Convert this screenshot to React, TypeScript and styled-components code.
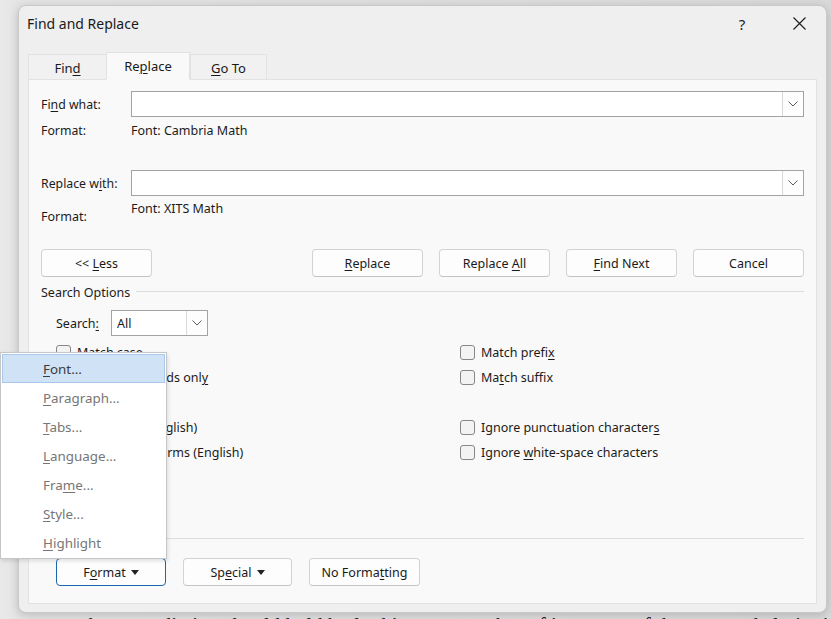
import { FC, ReactNode } from 'react';
import styled, { createGlobalStyle } from 'styled-components';

const GlobalStyle = createGlobalStyle`
  html, body {
    margin: 0;
    padding: 0;
  }
  body {
    font-family: 'Noto Sans', 'Open Sans', sans-serif;
    font-size: 12px;
    color: #1b1b1b;
    background: #dedede;
  }
  * {
    box-sizing: border-box;
  }
`;

const Desktop = styled.div`
  position: relative;
  width: 831px;
  height: 619px;
  overflow: hidden;
  background: #e4e4e4;
`;

const DocPage = styled.div`
  height: 100%;
  display: flex;
  flex-direction: column;
  justify-content: flex-end;
  padding: 0 0 0 40px;
  background: linear-gradient(to right, #e9e9e9 0, #e4e4e4 18px, #d9d9d9 100%);
`;

const DocText = styled.div`
  font-family: 'Liberation Serif', serif;
  font-size: 21px;
  line-height: 1;
  color: #1a1a1a;
  white-space: nowrap;
  margin-bottom: -17px;
`;

const Dialog = styled.div`
  position: absolute;
  left: 18px;
  top: 5px;
  width: 809px;
  height: 608px;
  display: flex;
  flex-direction: column;
  background: #efefef;
  border: 1px solid #c9c9c9;
  border-radius: 8px;
  box-shadow: 0 2px 10px rgba(0, 0, 0, 0.18);
`;

const TitleBar = styled.div`
  height: 35px;
  display: flex;
  align-items: center;
  padding-left: 8px;
`;

const Title = styled.div`
  flex: 1;
  font-size: 14px;
  color: #1a1a1a;
`;

const TitleControls = styled.div`
  display: flex;
  align-items: center;
  gap: 19px;
  margin-right: 4px;
`;

const HelpButton = styled.div`
  width: 30px;
  text-align: center;
  font-size: 15px;
  color: #222;
`;

const CloseButton = styled.div`
  width: 46px;
  height: 30px;
  display: flex;
  align-items: center;
  justify-content: center;
`;

const TabRow = styled.div`
  display: flex;
  align-items: flex-end;
  height: 28px;
  margin-top: 11px;
  padding-left: 9px;
  position: relative;
  z-index: 1;
  margin-bottom: -1px;
`;

const Tab = styled.div<{ active?: boolean; w: number }>`
  width: ${(p) => p.w}px;
  height: ${(p) => (p.active ? 28 : 26)}px;
  display: flex;
  align-items: center;
  justify-content: center;
  padding-top: ${(p) => (p.active ? 0 : 1)}px;
  font-size: 13px;
  color: #1a1a1a;
  background: ${(p) => (p.active ? '#f9f9f9' : '#f1f1f1')};
  border: 1px solid #e2e2e2;
  border-bottom: ${(p) => (p.active ? '1px solid #f9f9f9' : '1px solid #e2e2e2')};
  margin-left: ${(p) => (p.active ? -1 : 0)}px;
`;

const Panel = styled.div`
  margin: 0 9px 0 9px;
  height: 525px;
  background: #f9f9f9;
  border: 1px solid #e2e2e2;
  padding: 11px 12px 0 12px;
  display: flex;
  flex-direction: column;
`;

const FieldRow = styled.div<{ top?: number }>`
  display: flex;
  align-items: center;
  height: 26px;
  margin-top: ${(p) => p.top ?? 0}px;
`;

const Label = styled.div`
  width: 90px;
  font-size: 12.3px;
`;

const ComboInput = styled.div`
  flex: 1;
  height: 26px;
  display: flex;
  background: #fff;
  border: 1px solid #a3a3a3;
`;

const ComboText = styled.div`
  flex: 1;
  padding-left: 5px;
  display: flex;
  align-items: center;
  font-size: 12.5px;
`;

const ComboArrow = styled.div`
  width: 21px;
  display: flex;
  align-items: center;
  justify-content: center;
  border-left: 1px solid #d9d9d9;
  background: #fdfdfd;
`;

const FormatRow = styled.div`
  display: flex;
  height: 26px;
  align-items: center;
  font-size: 12.5px;
`;

const FormatRowLow = styled.div`
  display: flex;
  height: 34px;
  align-items: flex-start;
  font-size: 12.5px;
  line-height: 26px;
`;

const LowLabel = styled.div`
  width: 90px;
  padding-top: 8px;
`;

const ButtonRow = styled.div<{ top: number; indent?: number; gap?: number }>`
  display: flex;
  align-items: center;
  gap: ${(p) => p.gap ?? 16}px;
  margin-top: ${(p) => p.top}px;
  padding-left: ${(p) => p.indent ?? 0}px;
`;

const Spacer = styled.div`
  flex: 1;
`;

const Button = styled.div<{ focused?: boolean; w?: number }>`
  width: ${(p) => p.w ?? 111}px;
  height: 28px;
  display: flex;
  align-items: center;
  justify-content: center;
  gap: 5px;
  font-size: 12.5px;
  color: #1a1a1a;
  background: #fdfdfd;
  border: 1px solid ${(p) => (p.focused ? '#1a68b0' : '#d3d3d3')};
  border-bottom-color: ${(p) => (p.focused ? '#1a68b0' : '#c4c4c4')};
  border-radius: 4px;
`;

const GroupHeader = styled.div<{ top: number }>`
  display: flex;
  align-items: center;
  height: 18px;
  margin-top: ${(p) => p.top}px;
  font-size: 12.5px;
`;

const GroupLine = styled.div`
  flex: 1;
  height: 1px;
  margin: 0 0 1px 6px;
  background: #dddddd;
`;

const SearchRow = styled.div`
  display: flex;
  align-items: center;
  height: 26px;
  margin-top: 9px;
  padding-left: 15px;
  font-size: 12.5px;
`;

const SearchLabel = styled.div`
  width: 55px;
`;

const SelectBox = styled(ComboInput)`
  flex: none;
  width: 97px;
`;

const OptionsGrid = styled.div`
  display: grid;
  grid-template-columns: 404px 1fr;
  grid-auto-rows: 25px;
  margin-top: 4px;
  padding-left: 15px;
`;

const Option = styled.div`
  display: flex;
  align-items: center;
  gap: 6px;
  font-size: 12.5px;
`;

const CheckBox = styled.div`
  width: 15px;
  height: 15px;
  border: 1px solid #878787;
  border-radius: 3px;
  background: #f3f3f3;
`;

const U = styled.span`
  text-decoration: underline;
  text-underline-offset: 2px;
  text-decoration-thickness: 1px;
`;

const Menu = styled.div`
  position: absolute;
  left: 0;
  top: 352px;
  width: 167px;
  padding: 1px;
  background: #ffffff;
  border: 1px solid #c6c6c6;
  box-shadow: 1px 2px 4px rgba(0, 0, 0, 0.12);
  z-index: 5;
`;

const MenuItem = styled.div<{ active?: boolean }>`
  height: 29px;
  display: flex;
  align-items: center;
  padding-left: 40px;
  font-size: 13.4px;
  color: ${(p) => (p.active ? '#3c3c3c' : '#767676')};
  background: ${(p) => (p.active ? '#d0e2f5' : 'transparent')};
  border: 1px solid ${(p) => (p.active ? '#a9c9ec' : 'transparent')};
`;

const Chevron: FC = () => (
  <svg width="10" height="6" viewBox="0 0 10 6">
    <path d="M0.5 0.5 L5 5 L9.5 0.5" fill="none" stroke="#5a5a5a" strokeWidth="1" />
  </svg>
);

const Caret: FC = () => (
  <svg width="8" height="5" viewBox="0 0 8 5">
    <path d="M0 0 L8 0 L4 5 Z" fill="#222" />
  </svg>
);

const CloseIcon: FC = () => (
  <svg width="13" height="13" viewBox="0 0 13 13">
    <path d="M0.5 0.5 L12.5 12.5 M12.5 0.5 L0.5 12.5" stroke="#1a1a1a" strokeWidth="1.1" />
  </svg>
);

const Combo: FC<{ value?: string }> = ({ value }) => (
  <ComboInput>
    <ComboText>{value}</ComboText>
    <ComboArrow>
      <Chevron />
    </ComboArrow>
  </ComboInput>
);

const Check: FC<{ children: ReactNode }> = ({ children }) => (
  <Option>
    <CheckBox />
    <span>{children}</span>
  </Option>
);

const menuItems: { text: ReactNode; active?: boolean }[] = [
  { text: <><U>F</U>ont...</>, active: true },
  { text: <><U>P</U>aragraph...</> },
  { text: <><U>T</U>abs...</> },
  { text: <><U>L</U>anguage...</> },
  { text: <>Fra<U>m</U>e...</> },
  { text: <><U>S</U>tyle...</> },
  { text: <><U>H</U>ighlight</> },
];

const App: FC = () => {
  return (
    <Desktop>
      <GlobalStyle />
      <DocPage>
        <DocText>tests that a prediction should hold by looking at a number of instances of the ease and clarity in a set</DocText>
      </DocPage>

      <Dialog>
        <TitleBar>
          <Title>Find and Replace</Title>
          <TitleControls>
            <HelpButton>?</HelpButton>
            <CloseButton>
              <CloseIcon />
            </CloseButton>
          </TitleControls>
        </TitleBar>

        <TabRow>
          <Tab w={79}>
            <span>Fin<U>d</U></span>
          </Tab>
          <Tab w={84} active>
            <span>Re<U>p</U>lace</span>
          </Tab>
          <Tab w={77}>
            <span><U>G</U>o To</span>
          </Tab>
        </TabRow>

        <Panel>
          <FieldRow>
            <Label>Fi<U>n</U>d what:</Label>
            <Combo />
          </FieldRow>
          <FormatRow>
            <Label>Format:</Label>
            <span>Font: Cambria Math</span>
          </FormatRow>

          <FieldRow top={27}>
            <Label>Replace w<U>i</U>th:</Label>
            <Combo />
          </FieldRow>
          <FormatRowLow>
            <LowLabel>Format:</LowLabel>
            <span>Font: XITS Math</span>
          </FormatRowLow>

          <ButtonRow top={19}>
            <Button>
              <span>&lt;&lt; <U>L</U>ess</span>
            </Button>
            <Spacer />
            <Button>
              <span><U>R</U>eplace</span>
            </Button>
            <Button>
              <span>Replace <U>A</U>ll</span>
            </Button>
            <Button>
              <span><U>F</U>ind Next</span>
            </Button>
            <Button>
              <span>Cancel</span>
            </Button>
          </ButtonRow>

          <GroupHeader top={6}>
            <span>Search Options</span>
            <GroupLine />
          </GroupHeader>

          <SearchRow>
            <SearchLabel>Search<U>:</U></SearchLabel>
            <SelectBox>
              <ComboText>All</ComboText>
              <ComboArrow>
                <Chevron />
              </ComboArrow>
            </SelectBox>
          </SearchRow>

          <OptionsGrid>
            <Check>Matc<U>h</U> case</Check>
            <Check>Match prefi<U>x</U></Check>
            <Check>Find whole words onl<U>y</U></Check>
            <Check>Ma<U>t</U>ch suffix</Check>
            <Check>Use wildcards</Check>
            <div />
            <Check>Sounds li<U>k</U>e (English)</Check>
            <Check>Ignore punctuation character<U>s</U></Check>
            <Check>Find all <U>w</U>ord forms (English)</Check>
            <Check>Ignore <U>w</U>hite-space characters</Check>
          </OptionsGrid>

          <GroupHeader top={65}>
            <span>Replace</span>
            <GroupLine />
          </GroupHeader>

          <ButtonRow top={10} indent={15} gap={17}>
            <Button w={110} focused>
              <span>F<U>o</U>rmat</span>
              <Caret />
            </Button>
            <Button w={109}>
              <span>Sp<U>e</U>cial</span>
              <Caret />
            </Button>
            <Button w={111}>
              <span>No Forma<U>t</U>ting</span>
            </Button>
          </ButtonRow>
        </Panel>
      </Dialog>

      <Menu>
        {menuItems.map((item, i) => (
          <MenuItem key={i} active={item.active}>
            <span>{item.text}</span>
          </MenuItem>
        ))}
      </Menu>
    </Desktop>
  );
};

export default App;
